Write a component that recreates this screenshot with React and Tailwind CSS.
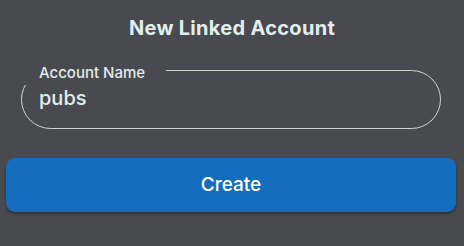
import React, { useState } from 'react';

export default function App() {
    const [name, setName] = useState('pubs');

    return (
        <div className="w-[464px] h-[246px] bg-[#494a4f] flex flex-col overflow-hidden" style={{ fontFamily: 'Inter, "Noto Sans", sans-serif' }}>
            <h2 className="pt-[16px] text-center text-[20px] leading-[24px] font-bold tracking-[0.3px] text-[#e2eeee]">New Linked Account</h2>

            <div className="relative mt-[30px] ml-[21px] mr-[23px] h-[59px] border border-[#d2d4d4] rounded-full">
                <span className="absolute left-[-3px] top-[-7px] pl-[20px] pr-[21px] pb-[3px] bg-[#494a4f] text-[15px] leading-[18px] font-medium text-[#e2eaea]">
                    Account Name
                </span>
                <input
                    value={name}
                    onChange={(e) => setName(e.target.value)}
                    className="w-full bg-transparent outline-none pt-[15px] pl-[17px] text-[20px] leading-[24px] font-medium text-[#e2eeee]"
                />
            </div>

            <button className="mt-[29px] ml-[6px] mr-[8px] h-[54px] rounded-[9px] bg-[#146dbf] shadow-[0_2px_3px_rgba(0,0,0,0.35)] text-white text-[19px] font-medium">
                Create
            </button>
        </div>
    );
}
